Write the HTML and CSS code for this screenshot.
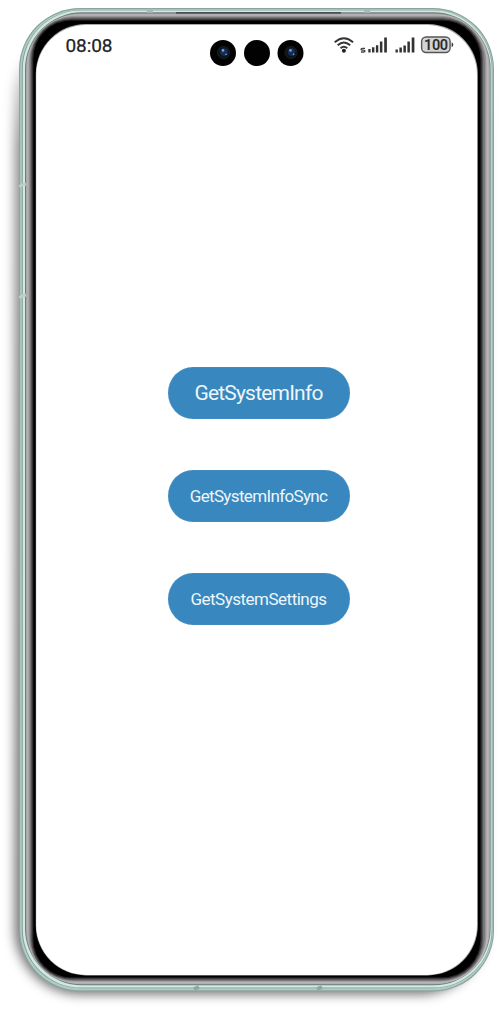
FILE: index.html
```html
<!DOCTYPE html>
<html lang="en">
<head>
<meta charset="utf-8">
<title>System info</title>
<link rel="stylesheet" href="styles.css">
</head>
<body>
<main class="phone">
  <svg class="frame" width="503" height="1012" viewBox="0 0 503 1012" aria-hidden="true">
    <defs>
      <filter id="soft" x="-20%" y="-20%" width="140%" height="140%"><feGaussianBlur stdDeviation="6"/></filter>
      <filter id="edge"><feGaussianBlur stdDeviation="0.4"/></filter>
      <linearGradient id="fade" x1="0" y1="0" x2="0" y2="1">
        <stop offset="0" stop-color="#000" stop-opacity="0"/>
        <stop offset=".12" stop-color="#000" stop-opacity=".45"/>
        <stop offset="1" stop-color="#000" stop-opacity=".58"/>
      </linearGradient>
    </defs>
    <rect x="15" y="30" width="470" height="964" rx="65" fill="url(#fade)" filter="url(#soft)"/>
    <g filter="url(#edge)">
      <rect x="19" y="8" width="475" height="983.5" rx="61" fill="#8ba49d"/>
      <rect x="20.2" y="9.2" width="472.7" height="981" rx="60" fill="#b0ccc4"/>
      <rect x="21.8" y="10.2" width="470.5" height="978" rx="59" fill="#849d96"/>
      <rect x="22.8" y="10.6" width="468.9" height="977" rx="58" fill="#d2e9e3"/>
      <rect x="25" y="12.3" width="465.6" height="973" rx="57" fill="#6c7e79"/>
      <rect x="26" y="13.6" width="463.8" height="970.6" rx="55" fill="#aaa7aa"/>
      <rect x="27.5" y="14.5" width="461" height="969" rx="51" fill="#b9b6b8"/>
      <rect x="28.6" y="15.8" width="457.8" height="966" rx="47" fill="#979597"/>
      <rect x="29.8" y="17" width="455" height="963.8" rx="44" fill="#777577"/>
      <rect x="31" y="18.2" width="452" height="961.5" rx="41" fill="#535153"/>
      <rect x="32.2" y="19.4" width="449.5" height="959" rx="39" fill="#292829"/>
      <rect x="33.4" y="20.4" width="447" height="957" rx="38" fill="#000"/>
      <rect x="35.8" y="24" width="442" height="951.4" rx="50" fill="#aaa"/>
      <rect x="36.2" y="24.9" width="440.8" height="950" rx="50" fill="#fff"/>
    </g>
    <path d="M176 12.8H341" stroke="#303a37" stroke-width="1.2"/>
    <path d="M147 10.8h6M364 10.8h6" stroke="#a5bbb5" stroke-width="4"/>
    <path d="M19.5 187l2-2 4.5-1M19.5 298l2-2 4.5-1" fill="none" stroke="#bfd0cb" stroke-width="3"/>
    <path d="M194 989l5-2M317 989l5-2" stroke="#91a8a1" stroke-width="4"/>
  </svg>

  <div class="screen">
    <header class="status">
      <time class="clock">08:08</time>
      <svg class="cameras" width="96" height="28" viewBox="0 0 96 28" aria-hidden="true">
        <g fill="#020203"><circle cx="14" cy="14" r="13"/><circle cx="48" cy="14" r="13"/><circle cx="81.5" cy="14" r="13"/></g>
        <g fill="#10141b" stroke="#1c1e22"><circle cx="14.5" cy="13.5" r="6"/><circle cx="82" cy="13.5" r="6"/></g>
        <g fill="#142d54"><circle cx="15" cy="13" r="3.8"/><circle cx="82.5" cy="13" r="3.8"/></g>
        <g fill="#6ba5dc"><circle cx="14" cy="11.4" r="1.3"/><circle cx="81.5" cy="11.4" r="1.3"/><circle cx="17" cy="15.4" r=".8"/><circle cx="84.5" cy="15.4" r=".8"/></g>
      </svg>
      <svg class="indicators" width="122" height="20" viewBox="0 0 122 20" aria-label="Wi-Fi, signal, battery 100">
        <g fill="none" stroke="#363636" stroke-width="1.9">
          <path d="M1.7 7.2Q10.9-.8 20.1 7.2M4.6 10.3Q10.9 4.7 17.2 10.3M7.500 13.2Q10.9 10.2 14.3 13.2"/>
        </g>
        <circle cx="10.9" cy="15.7" r="2" fill="#222"/>
        <path d="M32 13.4h-2.600q-1.400 0-1.400.9t1.400.9h1.200q1.400 0 1.400.9t-1.400.9h-2.600" fill="none" stroke="#444" stroke-width="1.300"/>
        <g fill="#333">
          <path d="M35.3 14h2.300v3.500h-2.300zM39 12.200h2.400v5.300h-2.400zM42.900 10.300h2.400v7.200h-2.400zM46.900 6.500h2.500v11h-2.500zM51.200 2.500h2.700v15h-2.700z"/>
          <path d="M62.500 14.500h2.400v3h-2.400zM66.400 12.500h2.500v5h-2.500zM70.400 10.500h2.500v7h-2.500zM74.400 6.500h2.500v11h-2.500zM78.700 2.500h2.700v15h-2.700z"/>
        </g>
        <rect x="88.600" y="2" width="28.500" height="15.500" rx="4.500" fill="#d4d4d4" stroke="#555" stroke-width="1.400"/>
        <path d="M118.600 7.500v4.500q1.700-.5 1.700-2.200t-1.700-2.300z" fill="#333"/>
        <text class="charge" x="102.900" y="15" text-anchor="middle">100</text>
      </svg>
    </header>
    <nav class="actions">
      <button class="action action-large"><span>GetSystemInfo</span></button>
      <button class="action action-sync"><span>GetSystemInfoSync</span></button>
      <button class="action"><span>GetSystemSettings</span></button>
    </nav>
  </div>
</main>
</body>
</html>
```
FILE: styles.css
```css
* { box-sizing: border-box; }
body { margin: 0; background: #fff; font-family: Roboto, sans-serif; }
.phone { position: relative; width: 503px; height: 1012px; padding: 25px 26px 37px 36px; overflow: hidden; }
.frame { position: absolute; inset: 0; }
.screen { position: relative; height: 950px; display: flex; flex-direction: column; }
.status { height: 56px; display: grid; grid-template-columns: 173px 96px 28px 122px; align-items: start; }
.clock { margin: 9px 0 0 29.5px; font: 400 19px/24px Roboto, sans-serif; letter-spacing: -.1px; color: #222; -webkit-text-stroke: .25px #222; }
.cameras { margin-top: 14px; }
.indicators { grid-column: 4; margin-top: 10px; }
.charge { font: 600 14.5px Roboto, sans-serif; letter-spacing: -.4px; fill: #2b2b2b; }
.actions { display: flex; flex-direction: column; gap: 51px; width: 182px; margin: 285.5px 0 0 131.5px; }
.action { display: flex; align-items: center; justify-content: center; width: 182px; height: 52px; padding: 1px 0 0; border: 0; border-radius: 25px / 26px; background: #3887be; box-shadow: inset 0 0 1px #8dbbdc; color: #edf6fb; font: 400 17px/24px Roboto, sans-serif; letter-spacing: -.5px; white-space: nowrap; }
.action-large { font-size: 21px; letter-spacing: -.8px; }
.action-sync { letter-spacing: -.65px; }
```
